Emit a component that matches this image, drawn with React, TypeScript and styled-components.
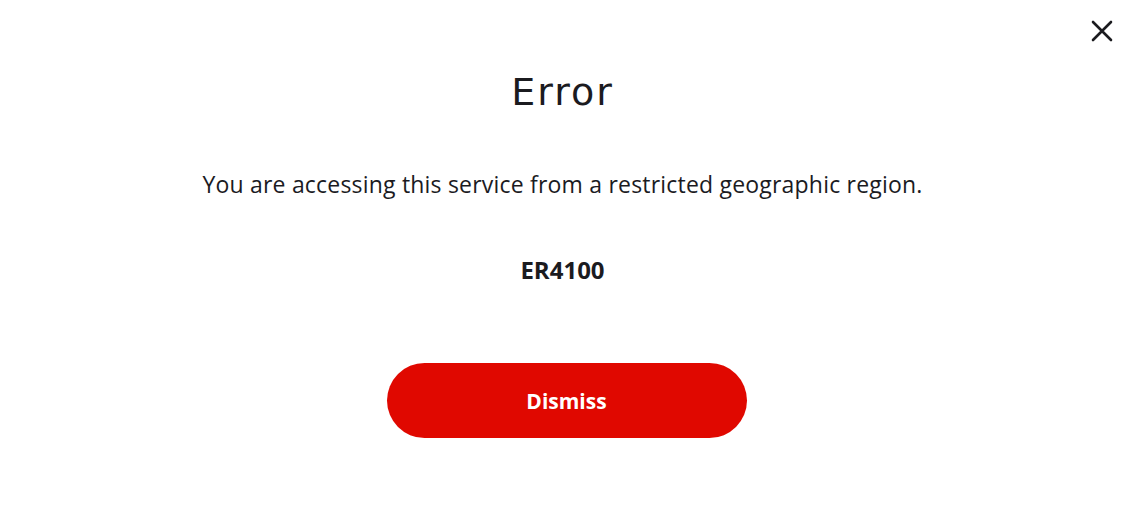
import { FC } from "react";
import styled, { createGlobalStyle } from "styled-components";

const GlobalStyle = createGlobalStyle`
    html, body {
        margin: 0;
        padding: 0;
        background: #ffffff;
    }
    body {
        font-family: "Open Sans", "Noto Sans", sans-serif;
        color: #1b1b1f;
    }
`

const Page = styled.div`
    position: relative;
    width: 1147px;
    height: 515px;
    background: #ffffff;
    box-sizing: border-box;
    padding: 68px 22px 0 0;
`

const Content = styled.div`
    display: flex;
    flex-direction: column;
    align-items: center;
`

const CloseBtn = styled.button`
    position: absolute;
    top: 19px;
    right: 33px;
    width: 24px;
    height: 24px;
    padding: 0;
    border: none;
    background: transparent;
    color: #1b1b1f;
    cursor: pointer;
    display: flex;
    align-items: center;
    justify-content: center;
`

const Title = styled.h1`
    margin: 0;
    font-family: "DejaVu Sans", "Noto Sans", sans-serif;
    font-weight: 400;
    font-size: 38px;
    line-height: 48px;
    letter-spacing: 2px;
    color: #1b1b1f;
`

const Message = styled.p`
    margin: 53px 0 0;
    font-size: 23px;
    line-height: 30px;
    letter-spacing: 0.2px;
    color: #1b1b1f;
`

const Code = styled.p`
    margin: 56px 0 0;
    font-size: 24px;
    font-weight: 700;
    line-height: 30px;
    color: #1b1b1f;
`

const Dismiss = styled.button`
    margin: 78px 0 0 8px;
    width: 360px;
    height: 75px;
    border: none;
    border-radius: 38px;
    background: #e00800;
    color: #ffffff;
    font-family: "Open Sans", "Noto Sans", sans-serif;
    font-size: 21px;
    font-weight: 700;
    cursor: pointer;
`

const App: FC = () => {
    return (
        <Page>
            <GlobalStyle />
            <CloseBtn aria-label="close">
                <svg width="22" height="22" viewBox="0 0 22 22" fill="none">
                    <path d="M2 2L20 20M20 2L2 20" stroke="currentColor" strokeWidth="2.6" strokeLinecap="round" />
                </svg>
            </CloseBtn>
            <Content>
                <Title>Error</Title>
                <Message>You are accessing this service from a restricted geographic region.</Message>
                <Code>ER4100</Code>
                <Dismiss>Dismiss</Dismiss>
            </Content>
        </Page>
    )
}

export default App;
